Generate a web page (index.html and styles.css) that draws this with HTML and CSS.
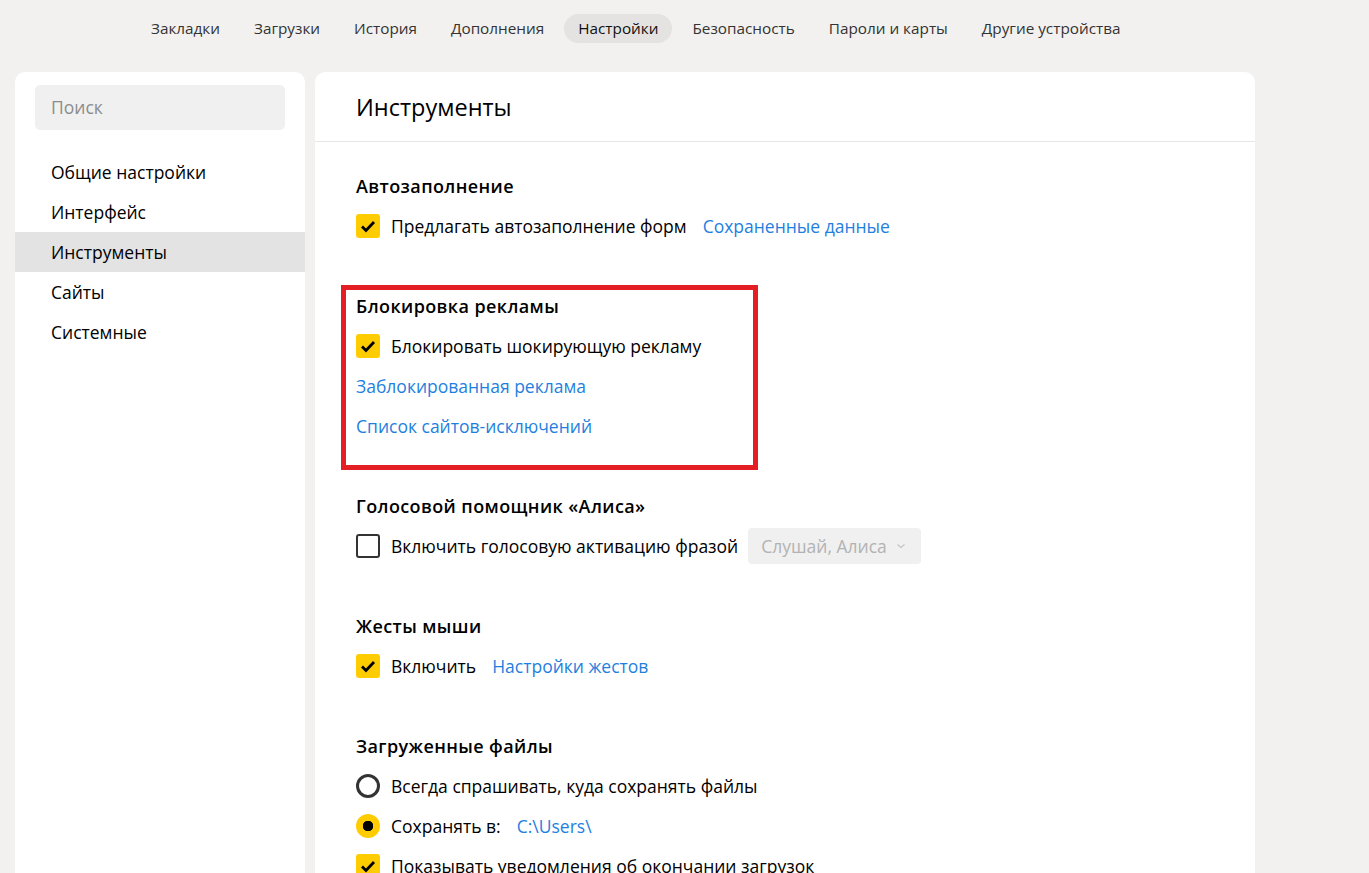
FILE: index.html
```html
<!DOCTYPE html>
<html lang="ru">
<head>
    <meta charset="UTF-8">
    <title>Настройки</title>
    <link rel="stylesheet" href="styles.css">
</head>
<body>
    <nav class="top-nav">
        <a class="nav-item">Закладки</a>
        <a class="nav-item">Загрузки</a>
        <a class="nav-item">История</a>
        <a class="nav-item">Дополнения</a>
        <a class="nav-item active">Настройки</a>
        <a class="nav-item">Безопасность</a>
        <a class="nav-item">Пароли и карты</a>
        <a class="nav-item">Другие устройства</a>
    </nav>

    <div class="layout">
        <aside class="sidebar">
            <div class="search">Поиск</div>
            <ul class="menu">
                <li class="menu-item">Общие настройки</li>
                <li class="menu-item">Интерфейс</li>
                <li class="menu-item active">Инструменты</li>
                <li class="menu-item">Сайты</li>
                <li class="menu-item">Системные</li>
            </ul>
        </aside>

        <main class="content">
            <div class="content-header">Инструменты</div>

            <div class="sections">
                <section class="section">
                    <h3 class="section-title">Автозаполнение</h3>
                    <div class="row">
                        <span class="checkbox checked">
                            <svg viewBox="0 0 24 24"><path d="M6 12.5l4 4 8-8.5"/></svg>
                        </span>
                        <span class="label">Предлагать автозаполнение форм</span>
                        <a class="link">Сохраненные данные</a>
                    </div>
                </section>

                <section class="section highlighted">
                    <h3 class="section-title">Блокировка рекламы</h3>
                    <div class="row">
                        <span class="checkbox checked">
                            <svg viewBox="0 0 24 24"><path d="M6 12.5l4 4 8-8.5"/></svg>
                        </span>
                        <span class="label">Блокировать шокирующую рекламу</span>
                    </div>
                    <div class="row">
                        <a class="link first">Заблокированная реклама</a>
                    </div>
                    <div class="row">
                        <a class="link first">Список сайтов-исключений</a>
                    </div>
                </section>

                <section class="section">
                    <h3 class="section-title">Голосовой помощник «Алиса»</h3>
                    <div class="row">
                        <span class="checkbox"></span>
                        <span class="label">Включить голосовую активацию фразой</span>
                        <span class="select">
                            Слушай, Алиса
                            <svg class="chevron" viewBox="0 0 10 6"><path d="M1.5 1.5l3.5 3 3.5-3"/></svg>
                        </span>
                    </div>
                </section>

                <section class="section">
                    <h3 class="section-title">Жесты мыши</h3>
                    <div class="row">
                        <span class="checkbox checked">
                            <svg viewBox="0 0 24 24"><path d="M6 12.5l4 4 8-8.5"/></svg>
                        </span>
                        <span class="label">Включить</span>
                        <a class="link">Настройки жестов</a>
                    </div>
                </section>

                <section class="section">
                    <h3 class="section-title">Загруженные файлы</h3>
                    <div class="row">
                        <span class="radio"></span>
                        <span class="label">Всегда спрашивать, куда сохранять файлы</span>
                    </div>
                    <div class="row">
                        <span class="radio selected"></span>
                        <span class="label">Сохранять в:</span>
                        <a class="link">C:\Users\</a>
                    </div>
                    <div class="row">
                        <span class="checkbox checked">
                            <svg viewBox="0 0 24 24"><path d="M6 12.5l4 4 8-8.5"/></svg>
                        </span>
                        <span class="label">Показывать уведомления об окончании загрузок</span>
                    </div>
                </section>
            </div>
        </main>
    </div>
</body>
</html>
```

FILE: styles.css
```css
* {
    margin: 0;
    padding: 0;
    box-sizing: border-box;
}

html, body {
    height: 100%;
    overflow: hidden;
}

body {
    font-family: 'Open Sans', 'Noto Sans', sans-serif;
    font-size: 17.5px;
    color: #000;
    background: #f2f1ef;
}

/* top navigation */
.top-nav {
    display: flex;
    gap: 6px;
    padding: 14px 0 0 137px;
    height: 72px;
}

.nav-item {
    height: 29px;
    line-height: 29px;
    padding: 0 14px;
    border-radius: 15px;
    font-size: 15.3px;
    color: #333;
    cursor: pointer;
}

.nav-item.active {
    background: #e4e3e1;
    color: #111;
}

/* page layout */
.layout {
    display: flex;
    gap: 10px;
    padding-left: 15px;
    height: calc(100% - 72px);
}

.sidebar {
    width: 290px;
    background: #fff;
    border-radius: 10px 10px 0 0;
    padding-top: 13px;
}

.search {
    margin: 0 20px;
    height: 45px;
    line-height: 45px;
    padding-left: 16px;
    background: #f0f0f0;
    border-radius: 5px;
    color: #8c8c8c;
}

.menu {
    list-style: none;
    margin-top: 22px;
}

.menu-item {
    height: 40px;
    line-height: 40px;
    padding-left: 36px;
    cursor: pointer;
}

.menu-item.active {
    background: #e3e3e3;
}

.content {
    width: 940px;
    background: #fff;
    border-radius: 10px 10px 0 0;
}

.content-header {
    height: 70px;
    line-height: 70px;
    padding-left: 41px;
    font-size: 23.5px;
    border-bottom: 1px solid #e6e6e6;
}

.sections {
    padding: 24px 0 0 41px;
}

.section {
    position: relative;
    margin-bottom: 40px;
}

/* red annotation frame */
.section.highlighted::after {
    content: '';
    position: absolute;
    top: -1px;
    left: -15px;
    width: 407px;
    height: 175px;
    border: 5px solid #e31e24;
    pointer-events: none;
}

.section-title {
    height: 40px;
    line-height: 40px;
    font-size: 18px;
    font-weight: 600;
    letter-spacing: 0.4px;
}

.row {
    display: flex;
    align-items: center;
    height: 40px;
}

.label {
    margin-left: 11px;
}

.link {
    color: #1f7fde;
    margin-left: 16px;
    cursor: pointer;
}

.link.first {
    margin-left: 0;
}

/* controls */
.checkbox {
    width: 24px;
    height: 24px;
    border-radius: 3px;
    border: 2px solid #333;
    flex-shrink: 0;
}

.checkbox.checked {
    background: #ffcc00;
    border: none;
}

.checkbox svg {
    display: block;
    width: 24px;
    height: 24px;
    fill: none;
    stroke: #000;
    stroke-width: 2.8;
}

.radio {
    width: 24px;
    height: 24px;
    border-radius: 50%;
    border: 3px solid #333;
    flex-shrink: 0;
}

.radio.selected {
    border: none;
    background: radial-gradient(circle, #000 0 5px, #ffcc00 5.5px);
}

.select {
    display: flex;
    align-items: center;
    margin-left: 10px;
    height: 36px;
    width: 173px;
    padding-left: 13px;
    background: #f0f0f0;
    border-radius: 4px;
    color: #b3b3b3;
}

.chevron {
    width: 10px;
    height: 6px;
    margin-left: 9px;
    fill: none;
    stroke: #c4c4c4;
    stroke-width: 1.2;
}
```
